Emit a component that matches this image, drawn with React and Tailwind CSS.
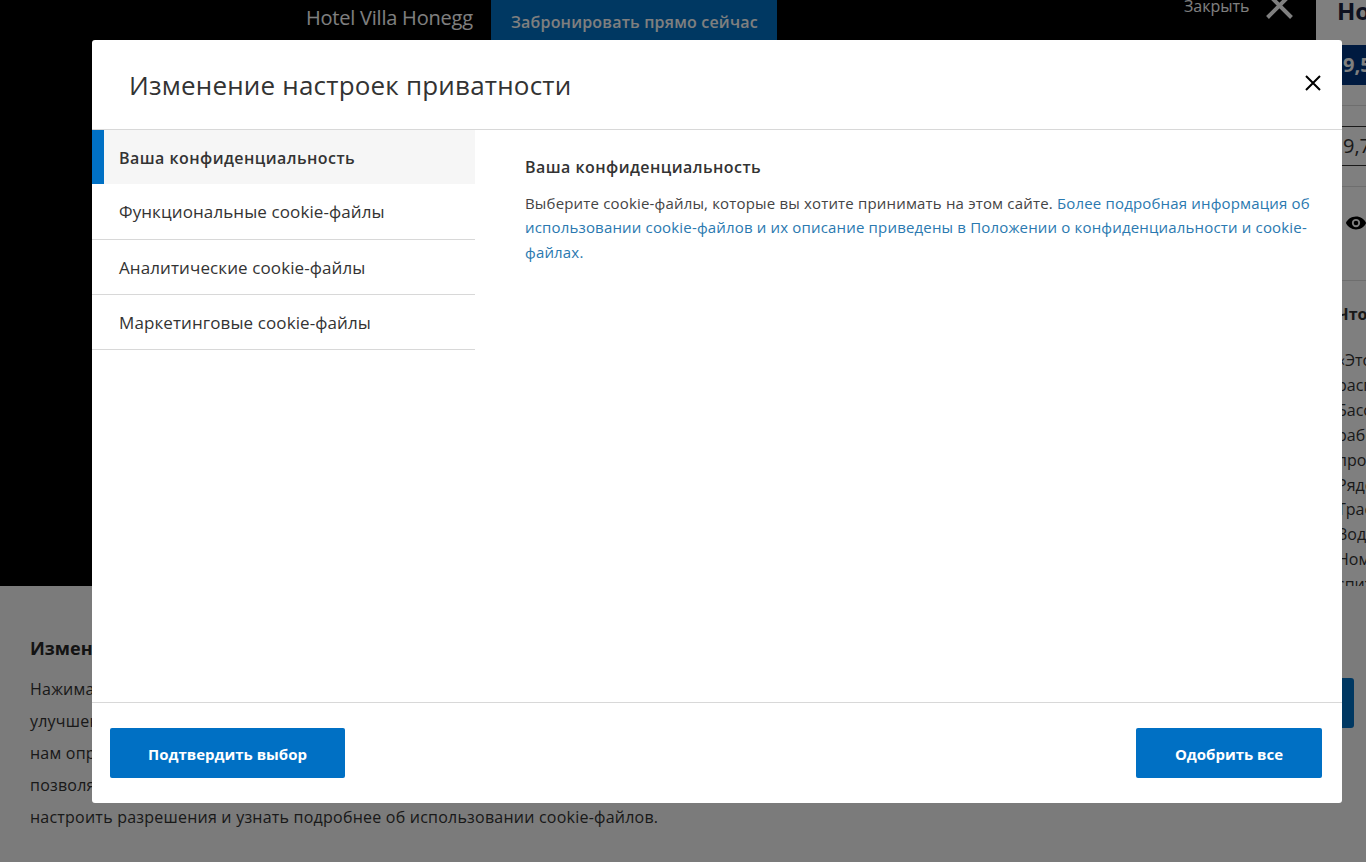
const font = { fontFamily: '"Open Sans", "Noto Sans", sans-serif' };

const rows = [
  { label: "Функциональные cookie-файлы", cls: "pt-0" },
  { label: "Аналитические cookie-файлы", cls: "pt-px" },
  { label: "Маркетинговые cookie-файлы", cls: "pt-px" },
];

const sideLines = [
  "«Этот отель",
  "расположен",
  "Бассейн и",
  "работает",
  "простор",
  "Рядом с",
  "Трасса",
  "Водные",
  "Номера",
  "спитые",
];

function Background() {
  return (
    <div className="flex h-[862px] w-[1366px] flex-col overflow-hidden bg-white text-[#333]">
      <div className="flex h-[586px] shrink-0">
        <div className="flex h-full w-[1316px] shrink-0 items-start bg-black">
          <div className="ml-[306px] mt-[5px] w-[185px] text-[20px] leading-[26px] tracking-[-0.22px] text-white">Hotel Villa Honegg</div>
          <div className="h-[40px] w-[286px] bg-[#0070c4] pl-[20px] pt-[9px] text-[16px] font-semibold leading-[26px] tracking-[0.2px] text-white">Забронировать прямо сейчас</div>
          <div className="ml-[407px] mt-[-6px] text-[16px] leading-[24px] text-white">Закрыть</div>
          <svg className="ml-[16px] mt-[-8px] shrink-0" width="27" height="27" viewBox="0 0 27 27" fill="none" stroke="#fff" strokeWidth="4">
            <path d="M1.500 1.500 L25.500 25.500 M25.500 1.500 L1.500 25.500" />
          </svg>
        </div>
        <div className="h-full flex-1 overflow-hidden bg-white pl-[21px]">
          <div className="mt-[-6px] whitespace-nowrap text-[24px] font-bold leading-[34px] text-[#1c2340]">Номер</div>
          <div className="ml-[-21px] mt-[17px] flex h-[40px] items-center whitespace-nowrap bg-[#003580] pl-[27px] text-[20px] font-bold text-white">9,5</div>
          <div className="ml-[-21px] mt-[20px] h-px bg-[#dddddd]" />
          <div className="ml-[-21px] mt-[20px] flex h-[40px] items-center whitespace-nowrap border-y border-[#333] pl-[27px] text-[20px]">9,7</div>
          <div className="ml-[-21px] mt-[20px] h-px bg-[#dddddd]" />
          <svg className="ml-[8px] mt-[25px] block" width="22" height="22" viewBox="0 0 24 24" fill="#000">
            <path d="M12 5C7 5 2.700 8.100 1 12c1.700 3.900 6 7 11 7s9.300-3.100 11-7c-1.700-3.900-6-7-11-7zm0 11.500a4.500 4.500 0 1 1 0-9 4.500 4.500 0 0 1 0 9zm0-7a2.500 2.500 0 1 0 0 5 2.500 2.500 0 0 0 0-5z" />
          </svg>
          <div className="ml-[-21px] mt-[46px] h-px bg-[#dddddd]" />
          <div className="mt-[22px] whitespace-nowrap text-[16px] font-bold leading-[22px]">Что</div>
          <div className="mt-[23px] whitespace-nowrap text-[16px] leading-[24.9px]">
            {sideLines.map((l) => (
              <div key={l}>{l}</div>
            ))}
          </div>
        </div>
      </div>
      <div className="flex flex-1 items-start bg-[#f6f6f6] pl-[30px] pt-[49px]">
        <div className="w-[1170px] shrink-0">
          <div className="text-[18px] font-bold leading-[26px] text-[#262626]">Изменение настроек приватности</div>
          <div className="mt-[12px] text-[16px] leading-[32px] tracking-[0.225px] text-[#333]">
            <div>Нажимая кнопку «Принять», вы соглашаетесь на использование cookie-файлов для анализа и</div>
            <div>улучшения работы сайта, а также для показа персонализированной рекламы. Эти файлы</div>
            <div>нам определить, как вы используете наш сайт, и запоминать ваши предпочтения. Они</div>
            <div>позволяют показывать рекламу, соответствующую вашим интересам. Перейдите в настройки</div>
            <div>настроить разрешения и узнать подробнее об использовании cookie-файлов.</div>
          </div>
        </div>
        <button className="ml-[-46px] mt-[43px] h-[50px] w-[200px] shrink-0 rounded-[3px] bg-[#0070c4] text-[16px] font-bold text-white">Принять</button>
      </div>
    </div>
  );
}

export default function App() {
  return (
    <div className="relative h-[862px] w-[1366px] overflow-hidden" style={font}>
      <Background />
      <div className="absolute inset-0 bg-black/50" />
      <div className="absolute left-[92px] top-[40px] flex h-[763px] w-[1250px] flex-col rounded-[3px] bg-white text-[#333]">
        <div className="flex h-[90px] shrink-0 items-start justify-between border-b border-[#d8d8d8] pl-[37px] pr-[21px]">
          <h1 className="mt-[27px] text-[26px] font-normal leading-[36px] tracking-[0.19px] text-[#333]">Изменение настроек приватности</h1>
          <svg className="mt-[35px]" width="16" height="16" viewBox="0 0 16 16" fill="none" stroke="#000" strokeWidth="2">
            <path d="M1 1 L15 15 M15 1 L1 15" />
          </svg>
        </div>
        <div className="flex min-h-0 flex-1">
          <div className="w-[383px] shrink-0">
            <div className="flex h-[54px] items-center border-l-[12px] border-[#0070c4] bg-[#f6f6f6] pl-[15px] pt-[2px] text-[16px] font-semibold tracking-[0.45px] text-[#333]">Ваша конфиденциальность</div>
            <div className="pt-px">
              {rows.map((r) => (
                <div key={r.label} className={`flex h-[55px] items-center border-b border-[#d8d8d8] pl-[27px] text-[17px] tracking-[0.1px] text-[#333] ${r.cls}`}>{r.label}</div>
              ))}
            </div>
          </div>
          <div className="flex-1 pl-[50px] pr-[30px] pt-[25px]">
            <h2 className="text-[16px] font-semibold leading-[24px] tracking-[0.45px] text-[#333]">Ваша конфиденциальность</h2>
            <p className="mt-[11.7px] text-[15px] leading-[24.5px] tracking-[0.17px] text-[#444]">
              Выберите cookie-файлы, которые вы хотите принимать на этом сайте.{" "}
              <a className="text-[#2a79b0]">Более подробная информация об использовании cookie-файлов и их описание приведены в Положении о конфиденциальности и cookie-файлах.</a>
            </p>
          </div>
        </div>
        <div className="flex h-[101px] shrink-0 items-start justify-between border-t border-[#d8d8d8] pl-[18px] pr-[20px] pt-[25px]">
          <button className="h-[50px] w-[235px] rounded-[2px] bg-[#0070c4] pt-[2px] text-[15px] font-bold text-white">Подтвердить выбор</button>
          <button className="h-[50px] w-[186px] rounded-[2px] bg-[#0070c4] pt-[2px] text-[15px] font-bold text-white">Одобрить все</button>
        </div>
      </div>
    </div>
  );
}
